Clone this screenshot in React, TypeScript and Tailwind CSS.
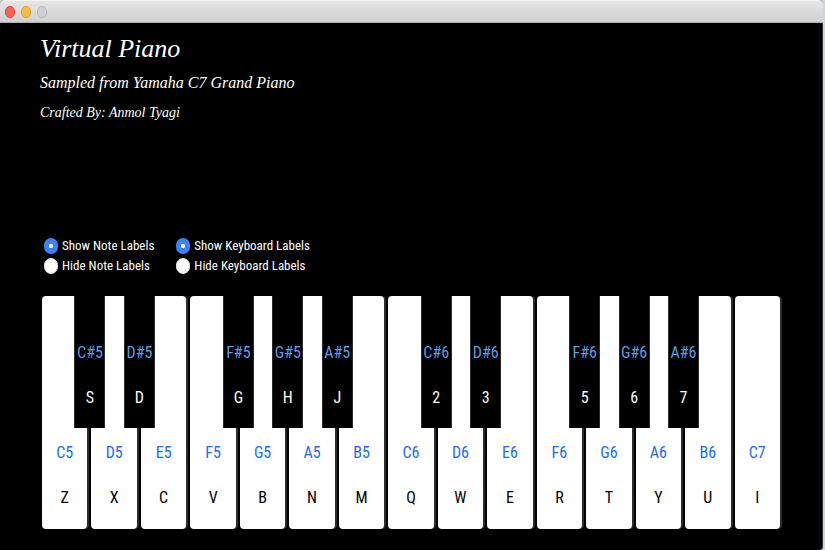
import { useState } from "react";

type BlackKey = { note: string; char: string };
type PianoKey = { note: string; char: string; sharp?: BlackKey };

const KEYS: PianoKey[] = [
  { note: "C5", char: "Z", sharp: { note: "C#5", char: "S" } },
  { note: "D5", char: "X", sharp: { note: "D#5", char: "D" } },
  { note: "E5", char: "C" },
  { note: "F5", char: "V", sharp: { note: "F#5", char: "G" } },
  { note: "G5", char: "B", sharp: { note: "G#5", char: "H" } },
  { note: "A5", char: "N", sharp: { note: "A#5", char: "J" } },
  { note: "B5", char: "M" },
  { note: "C6", char: "Q", sharp: { note: "C#6", char: "2" } },
  { note: "D6", char: "W", sharp: { note: "D#6", char: "3" } },
  { note: "E6", char: "E" },
  { note: "F6", char: "R", sharp: { note: "F#6", char: "5" } },
  { note: "G6", char: "T", sharp: { note: "G#6", char: "6" } },
  { note: "A6", char: "Y", sharp: { note: "A#6", char: "7" } },
  { note: "B6", char: "U" },
  { note: "C7", char: "I" },
];

function TitleBar() {
  return (
    <header className="flex h-[23px] items-center gap-1.5 rounded-t border-t border-b border-t-[#f4f4f4] border-b-[#b0b0b0] bg-linear-to-b from-[#e6e6e6] to-[#d0d0d0] pl-[5px]">
      <button type="button" aria-label="Close" className="h-3 w-2.5 rounded-full border border-[#e2463f] bg-[#fc615c]" />
      <button type="button" aria-label="Minimize" className="h-3 w-2.5 rounded-full border border-[#e0a02c] bg-[#fdbc40]" />
      <button type="button" aria-label="Zoom" disabled className="h-3 w-2.5 rounded-full border border-[#b9b9b9] bg-[#d0d0d0]" />
    </header>
  );
}

function RadioPair({ name, shown, onChange }: { name: string; shown: boolean; onChange: (v: boolean) => void }) {
  return (
    <fieldset>
      {[true, false].map((value) => (
        <label key={String(value)} className="flex h-5 items-center gap-1 whitespace-nowrap">
          <input
            type="radio"
            name={name}
            checked={shown === value}
            onChange={() => onChange(value)}
            className="h-4 w-3.5 shrink-0 appearance-none rounded-full border border-[#dddddd] bg-white checked:border-x-[5px] checked:border-y-[6px] checked:border-[#3b82f7]"
          />
          {value ? "Show" : "Hide"} {name} Labels
        </label>
      ))}
    </fieldset>
  );
}

export default function App() {
  const [showNotes, setShowNotes] = useState(true);
  const [showChars, setShowChars] = useState(true);

  return (
    <div className="min-h-screen bg-[#d4d6d8] pr-0.5">
      <div className="flex min-h-screen flex-col rounded-t rounded-br bg-black text-white">
        <TitleBar />
        <main className="flex grow flex-col rounded-br border-r border-[#333333] pr-[42px] pb-[21px] pl-10">
          <div className="grow font-['Apple_Chancery','Z003','Liberation_Serif',serif] italic">
            <h1 className="pt-2 text-[26px] leading-9">Virtual Piano</h1>
            <h2 className="text-[16px] leading-8">Sampled from Yamaha C7 Grand Piano</h2>
            <p className="text-[14px] leading-7">Crafted By: Anmol Tyagi</p>
          </div>
          <div className="mb-5 flex gap-[22px] pl-1 font-['Roboto_Condensed','Open_Sans',sans-serif] text-[13px]">
            <RadioPair name="Note" shown={showNotes} onChange={setShowNotes} />
            <RadioPair name="Keyboard" shown={showChars} onChange={setShowChars} />
          </div>
          <div className="ml-0.5 grid h-[233px] grid-cols-15 gap-1 font-['Roboto_Condensed','Lato',sans-serif] text-[16px] leading-5">
            {KEYS.map((key) => (
              <div key={key.note} className="relative">
                <button
                  type="button"
                  className="flex h-full w-full flex-col items-center justify-end gap-[25px] rounded bg-white pb-[21px] text-black shadow-[2px_0_0_#2a2d2d]"
                >
                  {showNotes && <span className="text-[#1a6cf5]">{key.note}</span>}
                  {showChars && <span>{key.char}</span>}
                </button>
                {key.sharp && (
                  <button
                    type="button"
                    className="absolute top-0 -right-[18px] z-10 flex h-[132px] w-[31px] flex-col items-center justify-end gap-[25px] border-x border-[#2a2a2a] bg-black pb-5 text-white"
                  >
                    {showNotes && <span className="text-[#5a9fe6]">{key.sharp.note}</span>}
                    {showChars && <span>{key.sharp.char}</span>}
                  </button>
                )}
              </div>
            ))}
          </div>
        </main>
      </div>
    </div>
  );
}
